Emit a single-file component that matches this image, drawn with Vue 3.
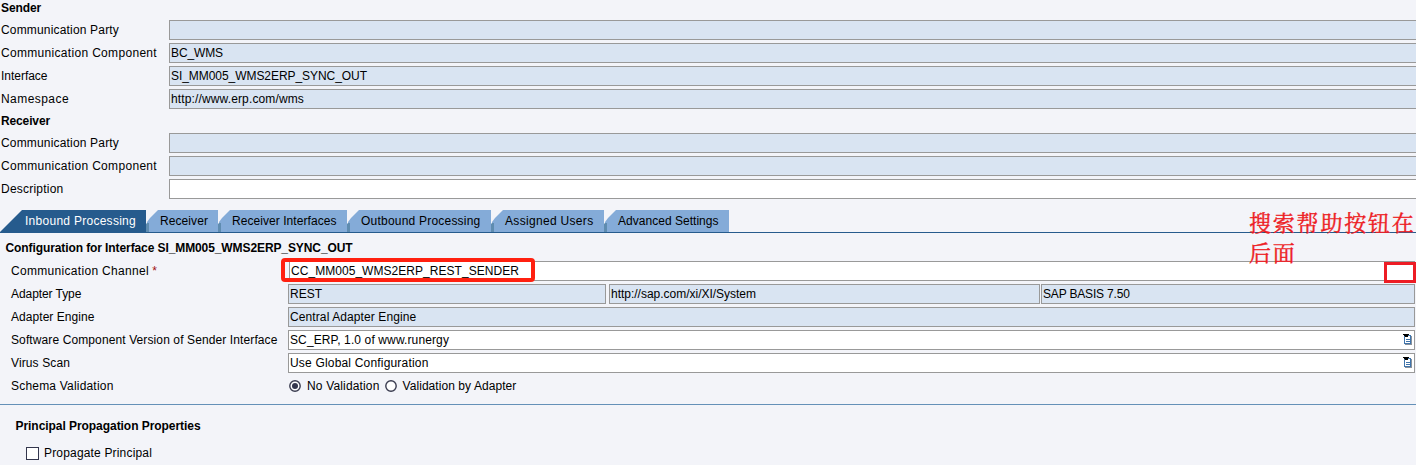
<script setup>
const sender = [
  { label: 'Communication Party', labelWidth: 118, value: '' },
  { label: 'Communication Component', labelWidth: 156, value: 'BC_WMS', width: 52 },
  { label: 'Interface', labelWidth: 46.5, value: 'SI_MM005_WMS2ERP_SYNC_OUT', width: 196 },
  { label: 'Namespace', labelWidth: 68, value: 'http://www.erp.com/wms', width: 133 },
]
const receiver = [
  { label: 'Communication Party', labelWidth: 118 },
  { label: 'Communication Component', labelWidth: 156 },
  { label: 'Description', labelWidth: 62.5, editable: true },
]
const tabs = [
  { label: 'Receiver', textWidth: 48, width: 72 },
  { label: 'Receiver Interfaces', textWidth: 104.5, width: 129 },
  { label: 'Outbound Processing', textWidth: 119.5, width: 144 },
  { label: 'Assigned Users', textWidth: 88.5, width: 113 },
  { label: 'Advanced Settings', textWidth: 100.5, width: 125 },
]
const pickers = [
  { label: 'Software Component Version of Sender Interface', labelWidth: 266.5, value: 'SC_ERP, 1.0 of www.runergy', width: 159 },
  { label: 'Virus Scan', labelWidth: 59, value: 'Use Global Configuration', width: 138.5 },
]

// Tracks a text out or in so that it spans the given width.
const pen = document.createElement('canvas').getContext('2d')
function track(text, width, weight = 'normal') {
  pen.font = `${weight} 12px "Liberation Sans", Arial, sans-serif`
  return { letterSpacing: ((width - pen.measureText(text).width) / text.length).toFixed(3) + 'px' }
}
const vFit = (el, { value, modifiers }) => {
  if (value) Object.assign(el.style, track(el.textContent, value, modifiers.bold ? 'bold' : 'normal'))
}
</script>

<template>
  <main class="page">
    <section class="party">
      <h2 v-fit.bold="40">Sender</h2>
      <div v-for="r in sender" :key="r.label" class="row">
        <label v-fit="r.labelWidth">{{ r.label }}</label>
        <div v-fit="r.width" class="field">{{ r.value }}</div>
      </div>
      <h2 v-fit.bold="49" class="second">Receiver</h2>
      <div v-for="r in receiver" :key="r.label" class="row">
        <label v-fit="r.labelWidth">{{ r.label }}</label>
        <div class="field" :class="{ white: r.editable }"></div>
      </div>
    </section>

    <nav class="tabs">
      <div v-fit="111" class="tab active">Inbound Processing</div>
      <div v-for="t in tabs" :key="t.label" class="tab" :style="{ width: t.width + 'px' }">
        <svg class="edge" width="14" height="22" viewBox="0 0 14 22">
          <path d="M0 14L3 11V22H0Z" fill="#5f8cb0" />
          <path d="M1 12L4 8L12 0H14V22H3V13H1Z" fill="#84abd8" />
        </svg>
        <span v-fit="t.textWidth">{{ t.label }}</span>
      </div>
    </nav>

    <section class="config">
      <h2 v-fit.bold="347">Configuration for Interface SI_MM005_WMS2ERP_SYNC_OUT</h2>
      <div class="row channel">
        <label><span v-fit="138">Communication Channel</span> <em>*</em></label>
        <div v-fit="228" class="field white">CC_MM005_WMS2ERP_REST_SENDER</div>
      </div>
      <div class="row">
        <label v-fit="70.5">Adapter Type</label>
        <div class="triple">
          <div v-fit="32" class="field">REST</div>
          <div v-fit="145" class="field">http://sap.com/xi/XI/System</div>
          <div v-fit="87" class="field">SAP BASIS 7.50</div>
        </div>
      </div>
      <div class="row">
        <label v-fit="83.5">Adapter Engine</label>
        <div v-fit="127" class="field">Central Adapter Engine</div>
      </div>
      <div v-for="p in pickers" :key="p.label" class="row">
        <label v-fit="p.labelWidth">{{ p.label }}</label>
        <div class="field white">
          <span v-fit="p.width">{{ p.value }}</span>
          <svg class="icon" width="10" height="11" viewBox="0 0 10 11" shape-rendering="crispEdges">
            <path d="M2 2H9V11H2Z" fill="#8a929c" />
            <path d="M1 1H8V10H1Z" fill="#3f74ab" />
            <path d="M2 2H7V9H2Z" fill="#fff" />
            <path d="M3 5H7V6H3ZM3 7H7V8H3Z" fill="#3f74ab" />
            <path d="M0 0H6V1H5V3H2V2H1V1H0Z" fill="#000" />
          </svg>
        </div>
      </div>
      <div class="row">
        <label v-fit="102.5">Schema Validation</label>
        <div class="radios">
          <svg width="12" height="12" viewBox="0 0 12 12">
            <circle cx="6" cy="6" r="5.2" fill="#fff" stroke="#3a3c50" stroke-width="1.4" />
            <circle cx="6" cy="6" r="3" fill="#33364d" />
          </svg>
          <span v-fit="72.5" class="first">No Validation</span>
          <svg width="12" height="12" viewBox="0 0 12 12">
            <circle cx="6" cy="6" r="5.2" fill="#fff" stroke="#3a3c50" stroke-width="1.4" />
          </svg>
          <span v-fit="114.5">Validation by Adapter</span>
        </div>
      </div>
    </section>

    <section class="principal">
      <h2 v-fit.bold="185">Principal Propagation Properties</h2>
      <div class="check"><i></i><span v-fit="108">Propagate Principal</span></div>
    </section>

    <div class="mark channel-mark"></div>
    <div class="mark button-mark"></div>
    <p class="note">搜索帮助按钮在<br>后面</p>
  </main>
</template>

<style>
body { margin: 0; overflow: hidden; }
</style>

<style scoped>
.page {
  position: relative;
  box-sizing: border-box;
  width: 1416px;
  height: 465px;
  overflow: hidden;
  background: #f3f4f9;
  color: #000;
  font: 12px/14px "Liberation Sans", Arial, sans-serif;
  white-space: nowrap;
}
h2 { margin: 0; font-size: 12px; line-height: 14px; font-weight: bold; }
.party { height: 210px; }
.party h2 { height: 18px; padding: 1px 0 0 1px; box-sizing: border-box; }
.party h2.second { height: 21px; padding-top: 4px; }
.row { display: flex; height: 23px; align-items: center; }
.row label { flex: none; box-sizing: border-box; }
.party .row label { width: 169px; padding-left: 1px; }
.field {
  flex: 1;
  box-sizing: border-box;
  height: 20px;
  padding-left: 1px;
  border: 1px solid #999;
  background: #d9e4f2;
  line-height: 18px;
}
.party .field { margin-right: -4px; }
.field.white { background: #fff; }
.tabs {
  display: flex;
  height: 23px;
  box-sizing: border-box;
  border-bottom: 1px solid #265b8d;
  line-height: 22px;
}
.tab { display: flex; height: 22px; }
.tab.active {
  box-sizing: border-box;
  width: 146px;
  padding-left: 25px;
  background: #265b8d;
  clip-path: polygon(22px 0, 100% 0, 100% 100%, 0 100%);
  color: #fff;
}
.edge { flex: none; }
.tab span { flex: 1; background: #84abd8; }
.config { height: 171px; border-bottom: 1px solid #6490b8; }
.config h2 { box-sizing: border-box; height: 26px; padding: 8px 0 0 5.5px; }
.config .row label { width: 288px; padding-left: 11px; }
.config .row > .field { margin-right: 1px; }
.config .channel .field { margin-left: 1px; }
em { font-style: normal; color: #a01010; }
.triple { display: grid; grid-template-columns: 318px 431px 373px; column-gap: 3px; }
.triple .field:nth-child(3) { margin-left: -2px; }
.triple .field:nth-child(3) { margin-right: 1px; }
.config .field { position: relative; }
.icon { position: absolute; right: 1px; top: 3px; }
.radios { display: flex; align-items: center; }
.radios svg { margin: 0 6px 0 1px; }
.radios .first { margin-right: 4px; }
.principal { padding: 14px 0 0 15.5px; }
.check { display: flex; align-items: center; margin: 13px 0 0 10.5px; }
.check i { box-sizing: border-box; width: 13px; height: 13px; margin-right: 5px; border: 1px solid #33364d; background: #fff; }
.mark { position: absolute; box-sizing: border-box; }
.channel-mark { left: 281px; top: 258px; width: 254px; height: 24px; border: 4px solid #ff2010; border-radius: 4px; }
.button-mark { left: 1384px; top: 262px; width: 32px; height: 21px; border: 3px solid #ed1c24; }
.note {
  position: absolute;
  left: 1249px;
  top: 209px;
  margin: 0;
  color: #ed1c24;
  font: 22px/30px "Liberation Serif", "Noto Serif CJK SC", "Noto Sans CJK SC", serif;
  letter-spacing: 1.8px;
  -webkit-text-stroke: 0.4px #ed1c24;
}
</style>
